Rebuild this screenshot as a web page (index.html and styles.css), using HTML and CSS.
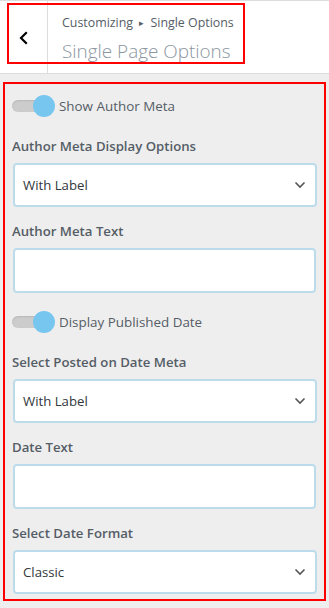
FILE: index.html
```html
<!DOCTYPE html>
<html lang="en">
<head>
    <meta charset="UTF-8">
    <meta name="viewport" content="width=device-width, initial-scale=1.0">
    <title>Single Page Options</title>
    <link rel="stylesheet" href="styles.css">
</head>
<body>
    <!-- Panel header -->
    <div class="panel-head">
        <button class="back-btn" type="button" aria-label="Back">
            <svg width="12" height="14" viewBox="0 0 12 14">
                <path d="M8 2 L3 7 L8 12" fill="none" stroke="#000" stroke-width="2.2" stroke-linecap="square"/>
            </svg>
        </button>
        <div class="head-title">
            <div class="crumbs">Customizing <span class="sep">&#9656;</span> Single Options</div>
            <h1>Single Page Options</h1>
        </div>
        <div class="mark mark-head"></div>
    </div>

    <!-- Options -->
    <div class="options">
        <label class="toggle-row">
            <span class="switch"><span class="knob"></span></span>
            <span class="toggle-label">Show Author Meta</span>
        </label>

        <div class="field">
            <div class="field-label">Author Meta Display Options</div>
            <div class="select"><span>With Label</span>
                <svg class="chev" width="12" height="8" viewBox="0 0 12 8"><path d="M1.5 1.5 L6 6 L10.5 1.5" fill="none" stroke="#555" stroke-width="1.6"/></svg>
            </div>
        </div>

        <div class="field">
            <div class="field-label">Author Meta Text</div>
            <div class="text-input"></div>
        </div>

        <label class="toggle-row after-field">
            <span class="switch"><span class="knob"></span></span>
            <span class="toggle-label">Display Published Date</span>
        </label>

        <div class="field">
            <div class="field-label">Select Posted on Date Meta</div>
            <div class="select"><span>With Label</span>
                <svg class="chev" width="12" height="8" viewBox="0 0 12 8"><path d="M1.5 1.5 L6 6 L10.5 1.5" fill="none" stroke="#555" stroke-width="1.6"/></svg>
            </div>
        </div>

        <div class="field">
            <div class="field-label">Date Text</div>
            <div class="text-input"></div>
        </div>

        <div class="field last">
            <div class="field-label">Select Date Format</div>
            <div class="select"><span>Classic</span>
                <svg class="chev" width="12" height="8" viewBox="0 0 12 8"><path d="M1.5 1.5 L6 6 L10.5 1.5" fill="none" stroke="#555" stroke-width="1.6"/></svg>
            </div>
        </div>
    </div>
</body>
</html>
```

FILE: styles.css
```css
body {
    margin: 0;
    background: #eeeeee;
    font-family: 'Open Sans', sans-serif;
    color: #555d66;
}

.panel-head {
    position: relative;
    display: flex;
    height: 72px;
    background: #fff;
    border-top: 1px solid #ddd;
    border-bottom: 1px solid #ddd;
}

.back-btn {
    width: 48px;
    padding: 0;
    border: 0;
    border-right: 1px solid #ddd;
    background: #fff;
    display: flex;
    align-items: center;
    justify-content: center;
    padding-top: 2px;
}

.head-title {
    padding: 11px 0 0 14px;
}

.crumbs {
    font-size: 12.4px;
    line-height: 22px;
    color: #555d66;
}

.crumbs .sep {
    font-size: 9px;
    margin: 0 3px;
    position: relative;
    top: -1px;
}

h1 {
    margin: 2px 0 0;
    font-size: 18.9px;
    font-weight: 300;
    line-height: 28px;
    color: #8b959e;
}

/* red annotation frames */
.mark {
    position: absolute;
    border: 2px solid #f00;
    pointer-events: none;
}

.mark-head {
    left: 7px;
    top: 2px;
    width: 234px;
    height: 57px;
}

.options {
    display: flex;
    flex-direction: column;
    margin: 8px 3px 0;
    border: 2px solid #f00;
    padding: 11px 8px 5px 7px;
}

.toggle-row {
    display: flex;
    align-items: center;
    height: 22px;
    margin-bottom: 19px;
}

.toggle-row.after-field {
    margin-top: 4px;
    margin-bottom: 19px;
}

.switch {
    position: relative;
    width: 33px;
    height: 12px;
    border-radius: 6px;
    background: #cccccc;
    box-shadow: inset 0 1px 2px rgba(0, 0, 0, 0.1);
}

.knob {
    position: absolute;
    top: -5px;
    right: -10px;
    width: 22px;
    height: 22px;
    border-radius: 50%;
    background: #76c6ef;
}

.toggle-label {
    margin-left: 14px;
    font-size: 13.4px;
    color: #555d66;
}

.field {
    margin-bottom: 14px;
}

.field.last {
    margin-bottom: 0;
}

.field-label {
    font-size: 13.2px;
    font-weight: 600;
    line-height: 20px;
    margin-bottom: 7px;
}

.select,
.text-input {
    box-sizing: border-box;
    margin-left: 1px;
    width: 304px;
    height: 44px;
    background: #fff;
    border: 2px solid #bcdcec;
    border-radius: 4px;
}

.text-input {
    width: 303px;
    height: 45px;
}

.select {
    display: flex;
    align-items: center;
    justify-content: space-between;
    padding: 0 8px;
    font-size: 13.2px;
    color: #32373c;
}

.chev {
    margin-right: 1px;
}
```
